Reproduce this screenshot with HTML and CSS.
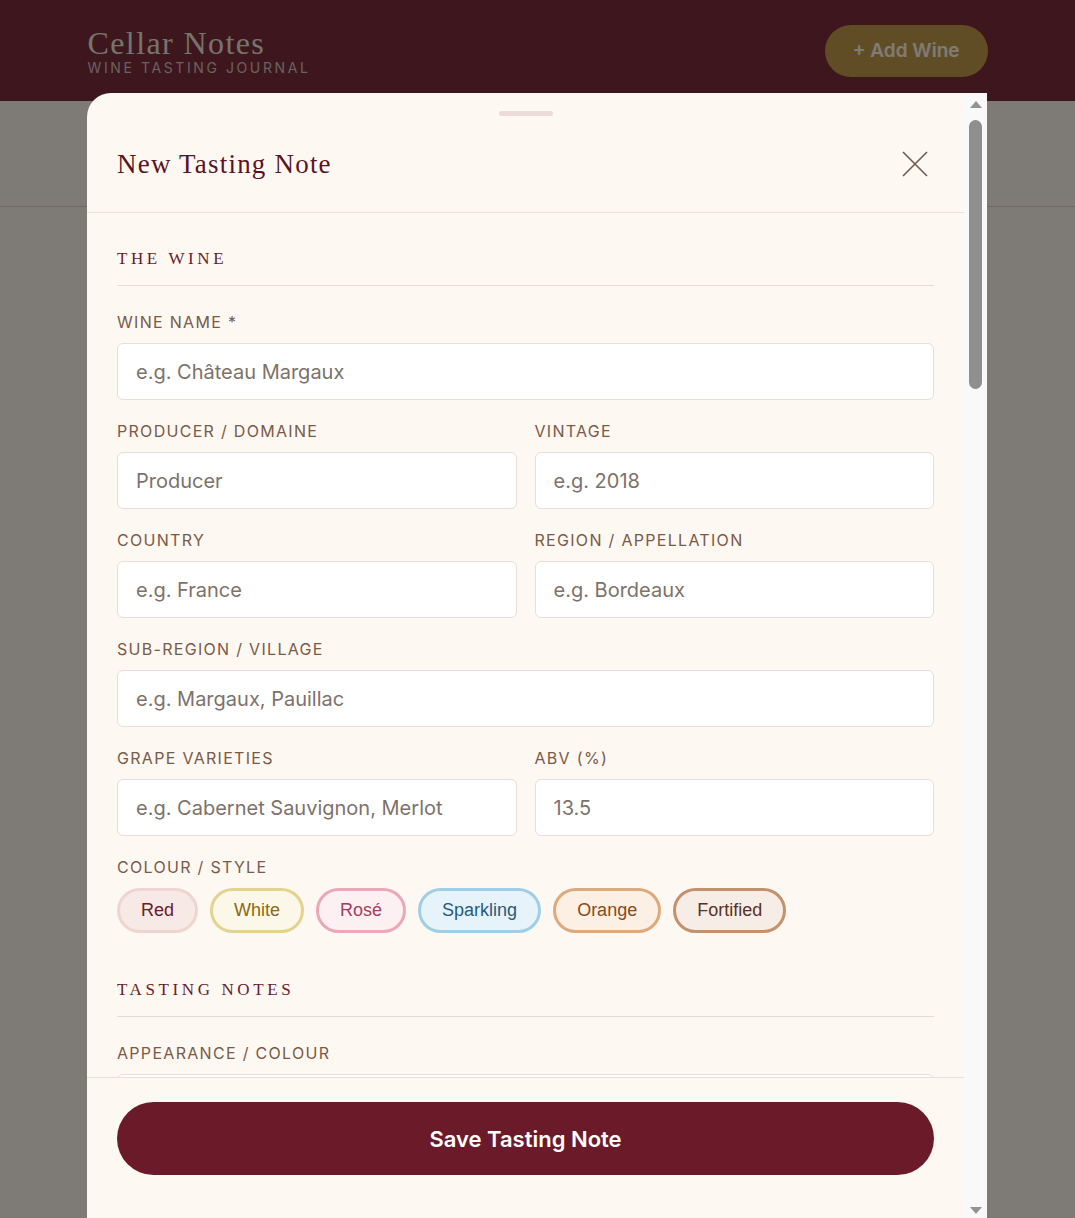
FILE: index.html
```html
<!DOCTYPE html>
<html lang="en">
<head>
    <meta charset="UTF-8">
    <meta name="viewport" content="width=device-width, initial-scale=1.0">
    <title>Cellar Notes - Wine Tasting Journal</title>
    <link rel="stylesheet" href="styles.css">
</head>
<body>
    <header class="topbar">
        <div class="container topbar-inner">
            <div class="brand">
                <div class="brand-name">Cellar Notes</div>
                <div class="brand-sub">Wine Tasting Journal</div>
            </div>
            <button class="add-btn">+ Add Wine</button>
        </div>
    </header>

    <div class="toolbar">
        <div class="container toolbar-inner">
            <input class="search" type="text">
        </div>
    </div>

    <div class="overlay">
        <div class="sheet">
            <div class="sheet-scroll">
                <div class="handle"></div>
                <div class="sheet-head">
                    <h2 class="sheet-title">New Tasting Note</h2>
                    <button class="close-btn" aria-label="Close">
                        <svg viewBox="0 0 26 26" width="26" height="26">
                            <path d="M1 1 L25 25 M25 1 L1 25" />
                        </svg>
                    </button>
                </div>

                <form class="sheet-body">
                    <section class="section">
                        <h3 class="section-title">The Wine</h3>

                        <div class="field">
                            <label>Wine Name *</label>
                            <input type="text" placeholder="e.g. Château Margaux">
                        </div>

                        <div class="row">
                            <div class="field">
                                <label>Producer / Domaine</label>
                                <input type="text" placeholder="Producer">
                            </div>
                            <div class="field">
                                <label>Vintage</label>
                                <input type="text" placeholder="e.g. 2018">
                            </div>
                        </div>

                        <div class="row">
                            <div class="field">
                                <label>Country</label>
                                <input type="text" placeholder="e.g. France">
                            </div>
                            <div class="field">
                                <label>Region / Appellation</label>
                                <input type="text" placeholder="e.g. Bordeaux">
                            </div>
                        </div>

                        <div class="field">
                            <label>Sub-region / Village</label>
                            <input type="text" placeholder="e.g. Margaux, Pauillac">
                        </div>

                        <div class="row">
                            <div class="field">
                                <label>Grape Varieties</label>
                                <input type="text" placeholder="e.g. Cabernet Sauvignon, Merlot">
                            </div>
                            <div class="field">
                                <label>ABV (%)</label>
                                <input type="text" placeholder="13.5">
                            </div>
                        </div>

                        <div class="field">
                            <label>Colour / Style</label>
                            <div class="chips">
                                <button type="button" class="chip chip-red">Red</button>
                                <button type="button" class="chip chip-white">White</button>
                                <button type="button" class="chip chip-rose">Rosé</button>
                                <button type="button" class="chip chip-sparkling">Sparkling</button>
                                <button type="button" class="chip chip-orange">Orange</button>
                                <button type="button" class="chip chip-fortified">Fortified</button>
                            </div>
                        </div>
                    </section>

                    <section class="section">
                        <h3 class="section-title">Tasting Notes</h3>

                        <div class="field">
                            <label>Appearance / Colour</label>
                            <input type="text">
                        </div>
                    </section>
                </form>

                <div class="sheet-foot">
                    <button class="save-btn">Save Tasting Note</button>
                </div>
            </div>

            <div class="scrollbar">
                <div class="scroll-up"></div>
                <div class="scroll-thumb"></div>
                <div class="scroll-down"></div>
            </div>
        </div>
    </div>
</body>
</html>
```

FILE: styles.css
```css
* {
    box-sizing: border-box;
}

body {
    margin: 0;
    font-family: 'Inter', 'Noto Sans', sans-serif;
    background-color: #fdf6ee;
    color: #3a2a24;
}

.container {
    max-width: 900px;
    margin: 0 auto;
}

/* header */

.topbar {
    background-color: #7a2e3a;
    height: 101px;
}

.topbar-inner {
    height: 100%;
    display: flex;
    justify-content: space-between;
    align-items: center;
}

.brand-name {
    font-family: 'Liberation Serif', serif;
    font-size: 32px;
    letter-spacing: 1.4px;
    line-height: 34px;
    color: #efe6de;
}

.brand-sub {
    font-size: 14px;
    letter-spacing: 2.6px;
    text-transform: uppercase;
    color: #d6c2c0;
    line-height: 16px;
}

.add-btn {
    background-color: #c29a4a;
    color: #fff6ea;
    border: none;
    border-radius: 30px;
    height: 52px;
    padding: 0 28px;
    font-family: 'Inter', sans-serif;
    font-size: 19px;
    font-weight: 600;
}

.toolbar {
    height: 106px;
    border-bottom: 1px solid #dccfc6;
}

.toolbar-inner {
    height: 100%;
    display: flex;
    align-items: center;
    justify-content: center;
}

.search {
    width: 600px;
    height: 44px;
    border: 1px solid #e6dad4;
    border-radius: 22px;
    background: #fff;
}

/* modal */

.overlay {
    position: fixed;
    inset: 0;
    background-color: rgba(0, 0, 0, 0.5);
    display: flex;
    justify-content: center;
    align-items: flex-end;
}

.sheet {
    width: 900px;
    margin-right: 1px;
    height: calc(100vh - 93px);
    display: flex;
    background-color: #fdf8f2;
    border-radius: 24px 0 0 0;
    overflow: hidden;
}

.sheet-scroll {
    flex: 1;
    overflow-y: auto;
    scrollbar-width: none;
}

/* scroll rail */

.scrollbar {
    width: 23px;
    flex: none;
    display: flex;
    flex-direction: column;
    align-items: center;
    background-color: #f9f9f9;
    padding: 8px 0 4px;
}

.scroll-up,
.scroll-down {
    width: 0;
    height: 0;
    border-left: 6px solid transparent;
    border-right: 6px solid transparent;
}

.scroll-up {
    border-bottom: 7px solid #939393;
}

.scroll-down {
    margin-top: auto;
    border-top: 7px solid #939393;
}

.scroll-thumb {
    width: 13px;
    height: 269px;
    margin-top: 12px;
    border-radius: 7px;
    background-color: #8f8f8f;
}

.handle {
    width: 54px;
    height: 5px;
    border-radius: 3px;
    background-color: #ecdbd8;
    margin: 18px auto 0;
}

.sheet-head {
    display: flex;
    justify-content: space-between;
    align-items: center;
    padding: 30px;
    border-bottom: 1px solid #eadfd9;
}

.sheet-title {
    margin: 0;
    font-family: 'Liberation Serif', serif;
    font-weight: normal;
    font-size: 27px;
    letter-spacing: 1.2px;
    line-height: 36px;
    color: #5a1422;
}

.close-btn {
    width: 36px;
    height: 36px;
    margin-right: 1px;
    padding: 0;
    border: none;
    background: none;
    display: flex;
    align-items: center;
    justify-content: center;
    cursor: pointer;
}

.close-btn path {
    stroke: #6e5a52;
    stroke-width: 1.6;
    fill: none;
}

.sheet-body {
    padding: 34px 30px 40px;
}

.section + .section {
    margin-top: 45px;
}

.section-title {
    margin: 0 0 26px;
    padding-bottom: 14px;
    border-bottom: 1px solid #e6dcd6;
    font-family: 'Liberation Serif', serif;
    font-weight: normal;
    font-size: 17px;
    line-height: 24px;
    letter-spacing: 3.6px;
    text-transform: uppercase;
    color: #6b1a29;
}

.row {
    display: grid;
    grid-template-columns: 1fr 1fr;
    gap: 18px;
}

.field {
    margin-bottom: 21px;
}

.field label {
    display: block;
    margin-bottom: 11px;
    font-size: 16px;
    line-height: 20px;
    letter-spacing: 1.3px;
    text-transform: uppercase;
    color: #7a5a48;
}

.field input {
    display: block;
    width: 100%;
    height: 57px;
    padding: 0 18px;
    border: 1px solid #e9dcd9;
    border-radius: 6px;
    background-color: #fff;
    font-family: 'Inter', sans-serif;
    font-size: 20px;
    color: #3a2a24;
}

.field input::placeholder {
    color: #7d726b;
}

.chips {
    display: flex;
    flex-wrap: wrap;
    gap: 12px;
}

.chip {
    height: 45px;
    padding: 0 21px;
    border: 3px solid;
    border-radius: 24px;
    font-family: 'Liberation Sans', Arial, sans-serif;
    font-size: 18px;
    cursor: pointer;
}

.chip-red { background: #f6e9e6; border-color: #eed5d0; color: #6b1a29; }
.chip-white { background: #fbf8e9; border-color: #e4d38e; color: #8a6a12; }
.chip-rose { background: #fdf0f3; border-color: #eaa8b8; color: #a53c5c; }
.chip-sparkling { background: #e7f3fa; border-color: #9fcfe6; color: #245c80; }
.chip-orange { background: #fcefe3; border-color: #dcaa7c; color: #8a4a1a; }
.chip-fortified { background: #f7ede7; border-color: #c4916f; color: #5a3222; }

.sheet-foot {
    position: sticky;
    bottom: 0;
    background-color: #fdf8f2;
    border-top: 1px solid #eadfd9;
    padding: 24px 30px 43px;
}

.save-btn {
    width: 100%;
    height: 73px;
    border: none;
    border-radius: 40px;
    background-color: #6b1a29;
    color: #fff;
    font-family: 'Inter', sans-serif;
    font-size: 22px;
    font-weight: 600;
    cursor: pointer;
}
```
